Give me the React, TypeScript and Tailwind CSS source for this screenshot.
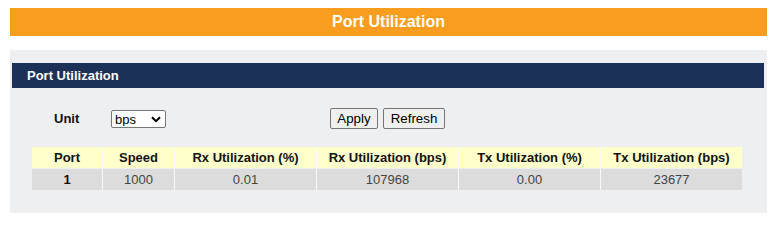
import { useState } from "react";

const columns = [
	{ label: "Port", width: "w-[70px]" },
	{ label: "Speed", width: "w-[72px]" },
	{ label: "Rx Utilization (%)", width: "w-[142px]" },
	{ label: "Rx Utilization (bps)", width: "w-[142px]" },
	{ label: "Tx Utilization (%)", width: "w-[142px]" },
	{ label: "Tx Utilization (bps)", width: "w-[142px]" },
];

const rows = [["1", "1000", "0.01", "107968", "0.00", "23677"]];

export default function App() {
	const [unit, setUnit] = useState("bps");

	return (
		<div className="min-h-[225px] bg-white pt-[8px] font-['Liberation_Sans',Arial,sans-serif]">
			<div className="mx-[10px] flex h-[28px] items-center justify-center bg-[#f89d1e] text-[16px] font-bold text-white">
				Port Utilization
			</div>
			<section className="mx-[10px] mt-[14px] h-[163px] bg-[#eeeff0] pt-[13px]">
				<div className="ml-[2px] mr-[3px] flex h-[25px] items-center bg-[#1b3158] pl-[15px] text-[13px] font-bold text-white">
					Port Utilization
				</div>
				<div className="mt-[20px] flex h-[21px] items-center text-[13px]">
					<span className="ml-[44px] w-[57px] font-bold text-[#111]">Unit</span>
					<div className="relative h-[18px] w-[55px]">
						<select
							value={unit}
							onChange={(event) => setUnit(event.target.value)}
							className="h-full w-full appearance-none rounded-[2px] border border-[#767676] bg-white pl-[3px] text-[13px] leading-none text-black"
						>
							<option value="bps">bps</option>
							<option value="Kbps">Kbps</option>
							<option value="Mbps">Mbps</option>
						</select>
						<svg
							className="pointer-events-none absolute right-[5px] top-[6px]"
							width="10"
							height="7"
							viewBox="0 0 10 7"
						>
							<path d="M1 1.2l4 4 4-4" fill="none" stroke="#000" strokeWidth="2" />
						</svg>
					</div>
					<button className="ml-[164px] h-[21px] w-[48px] rounded-[2px] border border-[#767676] bg-[#efefef] text-[13.3px] text-black">
						Apply
					</button>
					<button className="ml-[5px] h-[21px] w-[62px] rounded-[2px] border border-[#767676] bg-[#efefef] text-[13.3px] text-black">
						Refresh
					</button>
				</div>
				<div className="ml-[22px] mt-[18px] w-[711px] text-[13px]">
					<div className="flex">
						{columns.map((col, i) => (
							<div
								key={col.label}
								className={`${col.width} flex h-[21px] items-center justify-center bg-[#ffffcc] font-bold text-[#111] ${i > 0 ? "border-l border-[#f8f8f8]" : ""}`}
							>
								{col.label}
							</div>
						))}
					</div>
					{rows.map((row) => (
						<div key={row[0]} className="mt-px flex">
							{row.map((cell, i) => (
								<div
									key={i}
									className={`${columns[i].width} flex h-[21px] items-center justify-center bg-[#dcdcdc] ${i === 0 ? "font-bold text-[#111]" : "border-l border-[#f8f8f8] text-[#444]"}`}
								>
									{cell}
								</div>
							))}
						</div>
					))}
				</div>
			</section>
		</div>
	);
}
